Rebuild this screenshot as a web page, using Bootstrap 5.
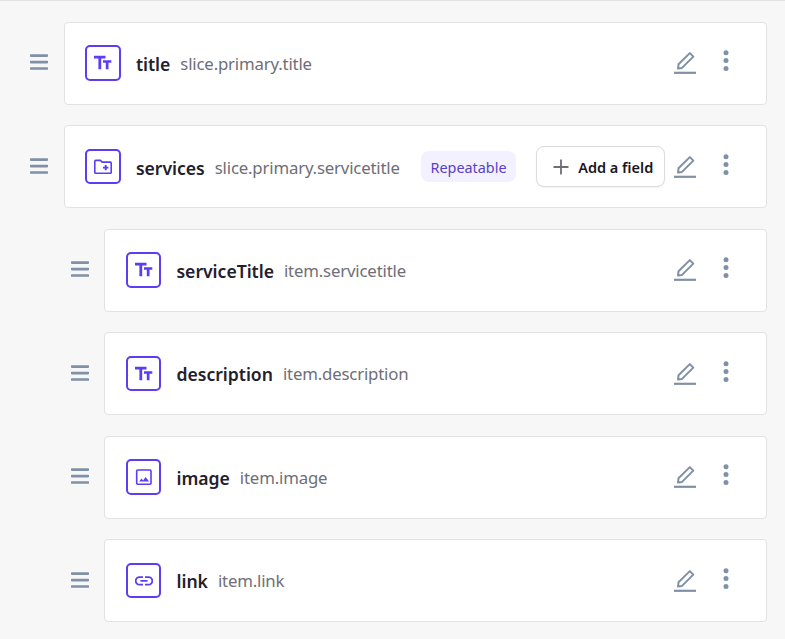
<!DOCTYPE html>
<html lang="en">
<head>
<meta charset="utf-8">
<meta name="viewport" content="width=device-width, initial-scale=1">
<title>Slice fields</title>
<link href="https://cdn.jsdelivr.net/npm/bootstrap@5.3.0/dist/css/bootstrap.min.css" rel="stylesheet">
<style>
body{background:#f7f7f7;font-family:"Noto Sans","Open Sans",sans-serif;overflow:hidden;height:639px;border-top:1px solid #e2e2e2}
.field-list{padding:20.9px 18px 0 30px;gap:20.6px}
.field-row{height:82.9px}
.field-row.nested{padding-left:40.6px}
.handle{width:18px;height:16px;margin:0 15.8px 2.2px 0}
.field-card{border:1px solid #e2e2e2;border-radius:4px;padding:0 37px 0 20.3px;color:#8091a7}
.type-icon{width:35.6px;height:35.6px;border:2px solid #5b3df5;border-radius:5px;color:#5b3df5;margin:0 15.2px .3px 0;padding-left:.8px}
.field-name{font-size:17.6px;font-weight:600;color:#24202b;line-height:24px;letter-spacing:-.02px;padding-top:1.4px}
.field-path{font-size:16.8px;color:#6f6e77;line-height:24px;margin-left:10px;letter-spacing:-.18px;padding-top:1.4px}
.tag{background:#f3f0ff;color:#5842c3;width:95px;height:31px;border-radius:8px;font-size:14.4px;margin-right:20px;padding-top:1px}
.add-btn{width:129px;height:41px;border:1px solid #dcdbdd;border-radius:8px;background:#fff;color:#1a1523;font-size:14.5px;font-weight:600;box-shadow:0 1px 2px rgba(0,0,0,.06);margin-right:9px;padding:2px 0 0 5.5px}
.add-btn svg{margin:0 9px 2px 0}
.actions{gap:27px}
</style>
<script src="https://cdn.jsdelivr.net/npm/bootstrap@5.3.0/dist/js/bootstrap.bundle.min.js"></script>
</head>
<body>
<svg class="d-none">
  <symbol id="bars" viewBox="0 0 18 16"><path d="M1 1.6h16M1 8.1h16M1 14.5h16" stroke="#8091a7" stroke-width="2.7" stroke-linecap="round"/></symbol>
  <symbol id="pencil" viewBox="0 0 22 24"><path d="M4 17.600l.5-4.300L15.800 2.100l3.500 3.500L8 16.900z" fill="none" stroke="currentColor" stroke-width="2" stroke-linejoin="round"/><path d="M0 21.800h22" stroke="currentColor" stroke-width="2.200"/></symbol>
  <symbol id="dots" viewBox="0 0 6 26"><g fill="currentColor"><circle cx="3" cy="2.700" r="2.500"/><circle cx="3" cy="10.600" r="2.500"/><circle cx="3" cy="18.500" r="2.500"/></g></symbol>
  <symbol id="text" viewBox="0 0 18 18"><path d="M0 1.800h11.500v2.600H7.200v10.900H4.400V4.400H0zM9 6.200h8.300v2.600h-2.800v6.500h-2.700V8.800H9z" fill="currentColor"/></symbol>
  <symbol id="folder" viewBox="0 0 18 18"><path d="M.8 3.200q0-.8.8-.8h4.700l1.900 1.700h8.200q.8 0 .8.800v9.600q0 .8-.8.800H1.600q-.8 0-.8-.8z" fill="none" stroke="currentColor" stroke-width="1.600"/><path d="M11.700 6.900v5.400M9 9.600h5.400" stroke="currentColor" stroke-width="1.900"/></symbol>
  <symbol id="image" viewBox="0 0 18 18"><rect x="1.700" y="2" width="14.300" height="14.200" rx="1" fill="none" stroke="currentColor" stroke-width="1.600"/><path d="M4.200 13.600l2.300-3 1.600 2 2.500-3.600 3.500 4.600z" fill="currentColor"/></symbol>
  <symbol id="chain" viewBox="0 0 18 18"><path d="M8 5.100H4.500a3.800 3.800 0 000 7.600H8M10 5.100h3.500a3.800 3.800 0 010 7.600H10M5.500 8.900h7" fill="none" stroke="currentColor" stroke-width="1.800"/></symbol>
</svg>
<main class="field-list d-flex flex-column">
  <div class="field-row d-flex align-items-center">
    <svg class="handle flex-shrink-0"><use href="#bars"/></svg>
    <div class="field-card bg-white flex-grow-1 h-100 d-flex align-items-center">
      <span class="type-icon d-flex align-items-center justify-content-center"><svg width="18" height="18"><use href="#text"/></svg></span>
      <span class="field-name">title</span><span class="field-path">slice.primary.title</span>
      <div class="actions d-flex align-items-center ms-auto"><svg width="22" height="24"><use href="#pencil"/></svg><svg width="6" height="26"><use href="#dots"/></svg></div>
    </div>
  </div>
  <div class="field-row d-flex align-items-center">
    <svg class="handle flex-shrink-0"><use href="#bars"/></svg>
    <div class="field-card bg-white flex-grow-1 h-100 d-flex align-items-center">
      <span class="type-icon d-flex align-items-center justify-content-center"><svg width="18" height="18"><use href="#folder"/></svg></span>
      <span class="field-name">services</span><span class="field-path">slice.primary.servicetitle</span>
      <span class="tag d-flex align-items-center justify-content-center ms-auto">Repeatable</span>
      <button type="button" class="add-btn d-flex align-items-center justify-content-center"><svg width="16" height="16" viewBox="0 0 16 16"><path d="M8 .5v15M.5 8h15" stroke="#6f6e77" stroke-width="1.800"/></svg>Add a field</button>
      <div class="actions d-flex align-items-center"><svg width="22" height="24"><use href="#pencil"/></svg><svg width="6" height="26"><use href="#dots"/></svg></div>
    </div>
  </div>
  <div class="field-row nested d-flex align-items-center">
    <svg class="handle flex-shrink-0"><use href="#bars"/></svg>
    <div class="field-card bg-white flex-grow-1 h-100 d-flex align-items-center">
      <span class="type-icon d-flex align-items-center justify-content-center"><svg width="18" height="18"><use href="#text"/></svg></span>
      <span class="field-name">serviceTitle</span><span class="field-path">item.servicetitle</span>
      <div class="actions d-flex align-items-center ms-auto"><svg width="22" height="24"><use href="#pencil"/></svg><svg width="6" height="26"><use href="#dots"/></svg></div>
    </div>
  </div>
  <div class="field-row nested d-flex align-items-center">
    <svg class="handle flex-shrink-0"><use href="#bars"/></svg>
    <div class="field-card bg-white flex-grow-1 h-100 d-flex align-items-center">
      <span class="type-icon d-flex align-items-center justify-content-center"><svg width="18" height="18"><use href="#text"/></svg></span>
      <span class="field-name">description</span><span class="field-path">item.description</span>
      <div class="actions d-flex align-items-center ms-auto"><svg width="22" height="24"><use href="#pencil"/></svg><svg width="6" height="26"><use href="#dots"/></svg></div>
    </div>
  </div>
  <div class="field-row nested d-flex align-items-center">
    <svg class="handle flex-shrink-0"><use href="#bars"/></svg>
    <div class="field-card bg-white flex-grow-1 h-100 d-flex align-items-center">
      <span class="type-icon d-flex align-items-center justify-content-center"><svg width="18" height="18"><use href="#image"/></svg></span>
      <span class="field-name">image</span><span class="field-path">item.image</span>
      <div class="actions d-flex align-items-center ms-auto"><svg width="22" height="24"><use href="#pencil"/></svg><svg width="6" height="26"><use href="#dots"/></svg></div>
    </div>
  </div>
  <div class="field-row nested d-flex align-items-center">
    <svg class="handle flex-shrink-0"><use href="#bars"/></svg>
    <div class="field-card bg-white flex-grow-1 h-100 d-flex align-items-center">
      <span class="type-icon d-flex align-items-center justify-content-center"><svg width="18" height="18"><use href="#chain"/></svg></span>
      <span class="field-name">link</span><span class="field-path">item.link</span>
      <div class="actions d-flex align-items-center ms-auto"><svg width="22" height="24"><use href="#pencil"/></svg><svg width="6" height="26"><use href="#dots"/></svg></div>
    </div>
  </div>
</main>
</body>
</html>
